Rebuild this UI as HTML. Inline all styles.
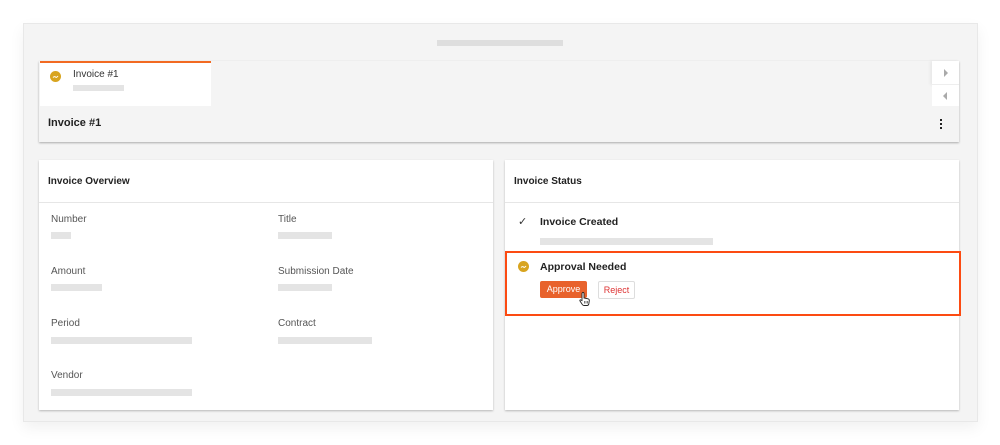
<!DOCTYPE html><html><head><style>
body{margin:0;width:1000px;height:445px;background:#fff;font-family:"Liberation Sans",sans-serif;position:relative;overflow:hidden}
.a{position:absolute}
.bar{position:absolute;height:7px;background:#e4e4e4}
.lbl{position:absolute;font-size:10px;color:#555}
.card{position:absolute;background:#fff;box-shadow:0 1px 2px rgba(0,0,0,.25)}
.dot{position:absolute;width:11px;height:11px;border-radius:50%;background:#d8a41f}
</style></head><body>
<div class="a" style="left:23px;top:23px;width:953px;height:397px;background:#f4f4f4;border:1px solid #e8e8e8;box-shadow:0 6px 14px rgba(0,0,0,.06)"></div>
<div class="bar" style="left:437px;top:40px;width:126px;height:6px;background:#dedede"></div>
<div class="card" style="left:39px;top:61px;width:920px;height:81px;background:#f4f4f4;box-shadow:0 1px 2px rgba(0,0,0,.3)"></div>
<div class="a" style="left:40px;top:61px;width:171px;height:45px;background:#fff;border-top:2px solid #f26a22;box-sizing:border-box"></div>
<svg class="a" style="left:50px;top:71px" width="11" height="11"><circle cx="5.5" cy="5.5" r="5.5" fill="#d8a41f"/><path d="M3 6.5 Q4.5 5 5.5 6 T8 5" stroke="#fff" fill="none" stroke-width="1"/></svg>
<div class="a" style="left:73px;top:69px;font-size:10px;color:#333">Invoice #1</div>
<div class="bar" style="left:73px;top:85px;width:51px;height:6px"></div>
<div class="a" style="left:932px;top:61px;width:27px;height:23px;background:#fff;border-bottom:1px solid #eee;box-shadow:-2px 0 3px rgba(0,0,0,.05)"></div>
<div class="a" style="left:932px;top:85px;width:27px;height:21px;background:#fff"></div>
<div class="a" style="left:944px;top:69px;border-left:4px solid #aaa;border-top:4px solid transparent;border-bottom:4px solid transparent"></div>
<div class="a" style="left:943px;top:92px;border-right:4px solid #aaa;border-top:4px solid transparent;border-bottom:4px solid transparent"></div>
<div class="a" style="left:48px;top:117px;font-size:11px;font-weight:bold;color:#222">Invoice #1</div>
<div class="a" style="left:940px;top:119px;width:2px;height:2px;background:#222;box-shadow:0 4px #222,0 8px #222"></div>

<div class="card" style="left:39px;top:160px;width:454px;height:250px"></div>
<div class="a" style="left:48px;top:176px;font-size:10px;font-weight:bold;color:#222">Invoice Overview</div>
<div class="a" style="left:39px;top:202px;width:454px;height:1px;background:#e6e6e6"></div>
<div class="lbl" style="left:51px;top:214px">Number</div><div class="bar" style="left:51px;top:232px;width:20px"></div>
<div class="lbl" style="left:278px;top:214px">Title</div><div class="bar" style="left:278px;top:232px;width:54px"></div>
<div class="lbl" style="left:51px;top:266px">Amount</div><div class="bar" style="left:51px;top:284px;width:51px"></div>
<div class="lbl" style="left:278px;top:266px">Submission Date</div><div class="bar" style="left:278px;top:284px;width:54px"></div>
<div class="lbl" style="left:51px;top:318px">Period</div><div class="bar" style="left:51px;top:337px;width:141px"></div>
<div class="lbl" style="left:278px;top:318px">Contract</div><div class="bar" style="left:278px;top:337px;width:94px"></div>
<div class="lbl" style="left:51px;top:370px">Vendor</div><div class="bar" style="left:51px;top:389px;width:141px"></div>

<div class="card" style="left:505px;top:160px;width:454px;height:250px"></div>
<div class="a" style="left:514px;top:176px;font-size:10px;font-weight:bold;color:#222">Invoice Status</div>
<div class="a" style="left:505px;top:202px;width:454px;height:1px;background:#e6e6e6"></div>
<div class="a" style="left:518px;top:215px;font-size:11px;color:#333">✓</div>
<div class="a" style="left:540px;top:216px;font-size:10.5px;font-weight:bold;color:#222">Invoice Created</div>
<div class="bar" style="left:540px;top:238px;width:173px"></div>
<div class="a" style="left:505px;top:251px;width:456px;height:65px;border:2px solid #fc4b12;box-sizing:border-box"></div>
<svg class="a" style="left:518px;top:261px" width="11" height="11"><circle cx="5.5" cy="5.5" r="5.5" fill="#d8a41f"/><path d="M3 6.5 Q4.5 5 5.5 6 T8 5" stroke="#fff" fill="none" stroke-width="1"/></svg>
<div class="a" style="left:540px;top:261px;font-size:10.5px;font-weight:bold;color:#222">Approval Needed</div>
<div class="a" style="left:540px;top:281px;width:47px;height:17px;background:#e8622c;border-radius:2px;color:#fff;font-size:9px;line-height:17px;text-align:center">Approve</div>
<div class="a" style="left:598px;top:281px;width:35px;height:16px;background:#fff;border:1px solid #ddd;border-radius:2px;color:#d33;font-size:9px;line-height:16px;text-align:center">Reject</div>
<svg class="a" style="left:579px;top:292px" width="12" height="15" viewBox="0 0 12 15"><path d="M3 1.5 a1 1 0 0 1 2 0 V6 l4 .8 a1.5 1.5 0 0 1 1.3 1.7 L9.8 12 Q9.5 13.5 8 13.5 H5 Q4 13.5 3.3 12.5 L1 9 Q.5 8 1.5 7.8 L3 8.5 Z" fill="#fff" stroke="#222" stroke-width="0.9"/><path d="M5.5 9v2.5M7 9v2.5M8.5 9v2.5" stroke="#222" stroke-width=".6"/></svg>
</body></html>
